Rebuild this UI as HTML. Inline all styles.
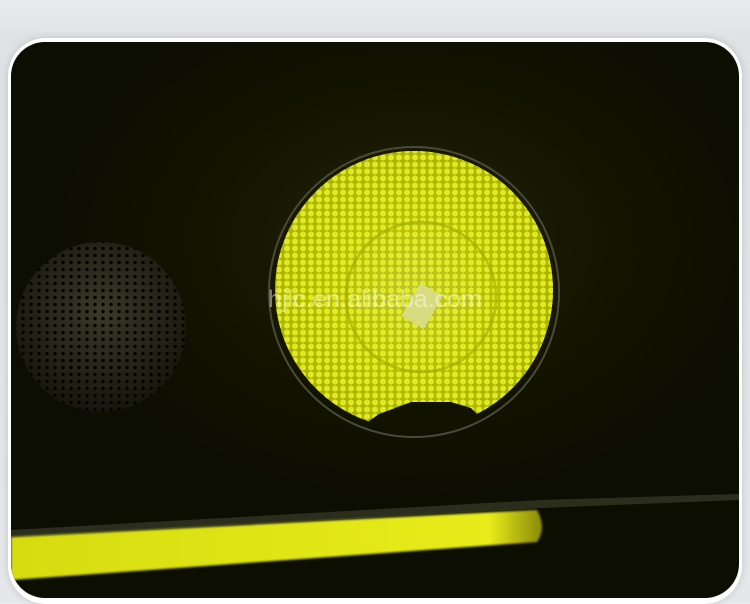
<!DOCTYPE html><html><head><style>
body{margin:0;width:750px;height:602px;overflow:hidden;background:linear-gradient(#e9ebee,#dfe1e5 40px,#e6e7ea);font-family:"Liberation Sans",sans-serif}
.card{position:absolute;left:8px;top:38px;width:734px;height:566px;background:#fff;border-radius:38px;box-shadow:0 0 8px rgba(0,0,0,.15)}
.photo{position:absolute;left:11px;top:42px;width:728px;height:556px;border-radius:34px;overflow:hidden;background:radial-gradient(ellipse 360px 260px at 400px 200px,#242207,#131300 60%,#0d0e02)}
</style></head><body>
<div class="card"></div>
<div class="photo">
<svg width="728" height="556" viewBox="0 0 728 556">
<defs>
<pattern id="d" width="8" height="7" patternUnits="userSpaceOnUse"><circle cx="4" cy="3.5" r="3" fill="#ecf22a"/></pattern>
<pattern id="s" width="8" height="7" patternUnits="userSpaceOnUse"><circle cx="4" cy="3.5" r="1.8" fill="#050500"/></pattern>
<radialGradient id="g" cx="0.5" cy="0.5" r="0.5"><stop offset="0" stop-color="#b9c430"/><stop offset="0.6" stop-color="#b4c000"/><stop offset="1" stop-color="#a8b400"/></radialGradient>
<radialGradient id="sp" cx="0.5" cy="0.4" r="0.6"><stop offset="0" stop-color="#3a3a2a"/><stop offset="1" stop-color="#16160c"/></radialGradient>
<linearGradient id="bar" x1="0" x2="1"><stop offset="0" stop-color="#d6dc10"/><stop offset="0.9" stop-color="#e8ec1a"/><stop offset="1" stop-color="#8a8a0a"/></linearGradient>
<clipPath id="c"><polygon points="250,90 560,90 560,362 470,376 460,366 440,360 400,360 368,372 348,386 250,386"/></clipPath>
</defs>
<circle cx="403" cy="250" r="145" fill="none" stroke="#4a4a3a" stroke-width="2"/>
<circle cx="90" cy="285" r="85" fill="url(#sp)"/>
<circle cx="90" cy="285" r="85" fill="url(#s)"/>
<g clip-path="url(#c)">
<circle cx="403" cy="248" r="139" fill="url(#g)"/>
<circle cx="403" cy="248" r="139" fill="url(#d)" opacity=".85"/>
<circle cx="410" cy="255" r="75" fill="none" stroke="#a0aa00" stroke-width="3" opacity=".6"/>
<rect x="398" y="245" width="26" height="38" fill="#d8dc80" transform="rotate(30 411 264)"/>
</g>
<path d="M0 488 L530 458 L728 452 L728 458 L530 466 L0 495Z" fill="#3a3c2a" opacity=".7"/>
<path d="M0 495 L526 468 Q536 486 526 500 L0 538Z" fill="url(#bar)" filter="blur(1px)"/>
<text x="257" y="265" font-size="24" textLength="214" lengthAdjust="spacingAndGlyphs" fill="#ffffff" fill-opacity=".45">hjlc.en.alibaba.com</text>
</svg>
</div>
</body></html>
